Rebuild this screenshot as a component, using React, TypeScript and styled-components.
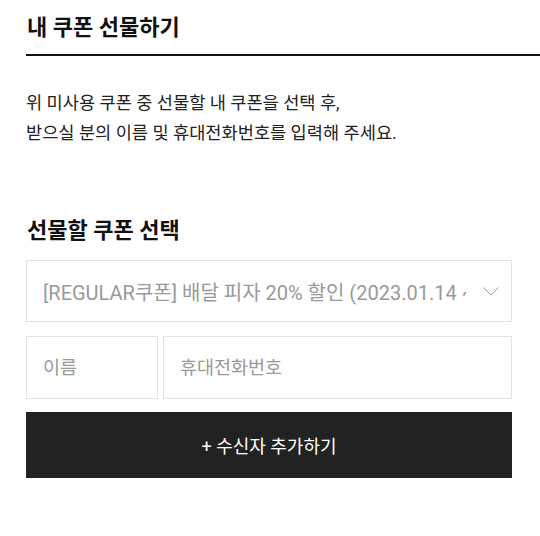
import React from "react";
import styled, { createGlobalStyle } from "styled-components";

const GlobalStyle = createGlobalStyle`
  html, body {
    margin: 0;
    padding: 0;
    background: #fff;
  }
  body {
    font-family: Roboto, "Noto Sans CJK KR", sans-serif;
    color: #222;
  }
  * { box-sizing: border-box; }
`;

const Page = styled.div`
  padding-left: 26px;
`;

const Header = styled.h1`
  margin: 0;
  padding: 13px 0 11px 1px;
  font-size: 22px;
  line-height: 30px;
  font-weight: 700;
  color: #111;
  border-bottom: 2px solid #111;
`;

const Form = styled.div`
  width: 486px;
  display: flex;
  flex-direction: column;
`;

const Description = styled.p`
  margin: 32px 0 0;
  font-size: 17.6px;
  line-height: 30px;
  color: #222;
`;

const SectionTitle = styled.h2`
  margin: 68px 0 0;
  padding-left: 1px;
  font-size: 22px;
  line-height: 30px;
  font-weight: 700;
  color: #111;
`;

const SelectBox = styled.div`
  margin-top: 14px;
  height: 62px;
  display: flex;
  align-items: center;
  gap: 17px;
  padding: 0 12px 0 16px;
  border: 1px solid #e2e2e2;
  background: #fff;
  cursor: pointer;
`;

const SelectText = styled.span`
  flex: 1;
  min-width: 0;
  overflow: hidden;
  white-space: nowrap;
  font-size: 20px;
  color: #999;
`;

const Chevron = styled.svg`
  flex: none;
  width: 16px;
  height: 9px;
`;

const InputRow = styled.div`
  margin-top: 14px;
  display: grid;
  grid-template-columns: 132px 1fr;
  gap: 5px;
`;

const TextInput = styled.input`
  height: 63px;
  width: 100%;
  padding: 0 16px;
  border: 1px solid #e2e2e2;
  border-radius: 0;
  outline: none;
  font-family: Roboto, "Noto Sans CJK KR", sans-serif;
  font-size: 18.5px;
  color: #222;
  background: #fff;
  &::placeholder {
    color: #999;
  }
`;

const AddButton = styled.button`
  margin-top: 13px;
  height: 66px;
  width: 100%;
  border: none;
  background: #222;
  color: #fff;
  font-family: Roboto, "Noto Sans CJK KR", sans-serif;
  font-size: 18px;
  cursor: pointer;
`;

export default function App() {
  return (
    <>
      <GlobalStyle />
      <Page>
        <Header>내 쿠폰 선물하기</Header>
        <Form>
          <Description>
            위 미사용 쿠폰 중 선물할 내 쿠폰을 선택 후,
            <br />
            받으실 분의 이름 및 휴대전화번호를 입력해 주세요.
          </Description>
          <SectionTitle>선물할 쿠폰 선택</SectionTitle>
          <SelectBox role="button">
            <SelectText>
              [REGULAR쿠폰] 배달 피자 20% 할인 (2023.01.14 ~ 2023.02.28)
            </SelectText>
            <Chevron viewBox="0 0 16 9" fill="none">
              <polyline
                points="0.5,0.5 8,8 15.5,0.5"
                stroke="#999"
                strokeWidth="1"
              />
            </Chevron>
          </SelectBox>
          <InputRow>
            <TextInput placeholder="이름" />
            <TextInput placeholder="휴대전화번호" />
          </InputRow>
          <AddButton>+ 수신자 추가하기</AddButton>
        </Form>
      </Page>
    </>
  );
}
